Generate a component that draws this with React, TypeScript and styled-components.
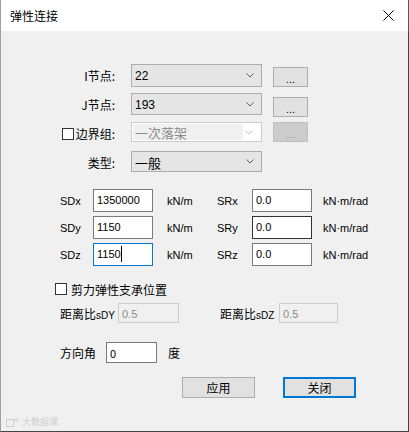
import React from "react";
import styled, { createGlobalStyle } from "styled-components";

const Global = createGlobalStyle`
  html, body { margin: 0; padding: 0; background: #f0f0f0; }
  * { box-sizing: border-box; }
`;

const FONT = `"Liberation Sans", "Noto Sans CJK SC", sans-serif`;

const Window = styled.div`
  width: 409px;
  height: 432px;
  display: flex;
  flex-direction: column;
  font-family: ${FONT};
  font-size: 12px;
  color: #000;
`;

const TitleBar = styled.div`
  height: 31px;
  background: #fff;
  display: flex;
  align-items: center;
  justify-content: space-between;
  padding: 0 14px 0 9px;
  border-left: 1px solid #a0a0a0;
  border-right: 1px solid #5a5a5a;
`;

const Title = styled.span`
  font-family: "Noto Sans CJK SC", sans-serif;
  font-size: 12px;
  margin-top: -1px;
`;

const Body = styled.div`
  flex: 1;
  background: #f0f0f0;
  border-left: 1px solid #a0a0a0;
  border-right: 1px solid #444;
  border-bottom: 1px solid #444;
  display: flex;
  flex-direction: column;
  padding-top: 33px;
  position: relative;
`;

const TopSection = styled.div`
  display: flex;
  flex-direction: column;
  gap: 6px;
  padding-left: 49px;
`;

const FieldRow = styled.div`
  display: flex;
  align-items: flex-start;
  height: 23px;
`;

const FieldLabel = styled.div`
  width: 65px;
  height: 23px;
  display: flex;
  align-items: center;
  justify-content: flex-end;
  font-family: "Noto Sans CJK SC", sans-serif;
  font-size: 12px;
  margin-right: 16px;
  gap: 2px;
`;

const CheckBox = styled.span<{ $size?: number }>`
  display: inline-block;
  width: ${(p) => p.$size ?? 12}px;
  height: ${(p) => p.$size ?? 12}px;
  border: 1px solid #333;
  background: #fff;
  flex: none;
`;

const Select = styled.div<{ $disabled?: boolean; $h: number }>`
  width: 131px;
  height: ${(p) => p.$h}px;
  border: 1px solid ${(p) => (p.$disabled ? "#cccccc" : "#adadad")};
  background: ${(p) => (p.$disabled ? "#fff" : "#e5e5e5")};
  display: flex;
  align-items: center;
  padding: ${(p) => (p.$disabled ? "1px" : "0 0 0 3px")};
  color: ${(p) => (p.$disabled ? "#8a8a8a" : "#000")};
`;

const SelectText = styled.span<{ $disabled?: boolean; $cjk?: boolean }>`
  flex: ${(p) => (p.$disabled ? "none" : "1")};
  width: ${(p) => (p.$disabled ? "110px" : "auto")};
  height: 100%;
  display: flex;
  align-items: center;
  background: ${(p) => (p.$disabled ? "#f0f0f0" : "transparent")};
  padding-left: ${(p) => (p.$disabled ? "2px" : "0")};
  font-family: ${(p) => (p.$cjk ? `"Noto Sans CJK SC", sans-serif` : FONT)};
  font-size: ${(p) => (p.$cjk ? "13px" : "12px")};
  padding-top: 1px;
`;

const Chevron = styled.svg`
  width: 8px;
  height: 5px;
  margin-left: auto;
  margin-right: 7px;
  flex: none;
`;

const DotButton = styled.div<{ $disabled?: boolean; $top: number; $h: number }>`
  width: 35px;
  height: ${(p) => p.$h}px;
  margin-top: ${(p) => p.$top}px;
  margin-left: 11px;
  border: 1px solid ${(p) => (p.$disabled ? "#bfbfbf" : "#adadad")};
  background: ${(p) => (p.$disabled ? "#cccccc" : "#e1e1e1")};
  color: ${(p) => (p.$disabled ? "#a0a0a0" : "#000")};
  display: flex;
  align-items: center;
  justify-content: center;
  font-size: 11px;
  padding-top: 3px;
`;

const StiffGrid = styled.div`
  display: grid;
  grid-template-columns: 33px 60px 14px 50px 35px 60px 11px auto;
  grid-auto-rows: 23px;
  row-gap: 4px;
  margin-top: 15px;
  padding-left: 59px;
  align-items: center;
`;

const AxisLabel = styled.span`
  font-size: 11px;
  padding-top: 1px;
`;

const Unit = styled.span`
  font-size: 11px;
  padding-top: 1px;
`;

const Spacer = styled.span``;

const TextBox = styled.div<{ $focus?: boolean; $dark?: boolean; $w?: number; $h?: number; $disabled?: boolean }>`
  width: ${(p) => p.$w ?? 60}px;
  height: ${(p) => p.$h ?? 23}px;
  border: 1px solid
    ${(p) => (p.$focus ? "#0078d7" : p.$dark ? "#333" : p.$disabled ? "#cccccc" : "#7a7a7a")};
  background: ${(p) => (p.$disabled ? "#f0f0f0" : "#fff")};
  color: ${(p) => (p.$disabled ? "#8a8a8a" : "#000")};
  display: flex;
  align-items: flex-start;
  padding: 3px 0 0 3px;
  font-size: 11px;
  line-height: 14px;
`;

const Caret = styled.span`
  display: inline-block;
  width: 1px;
  height: 16px;
  background: #000;
  margin-top: -1px;
`;

const ShearRow = styled.div`
  display: flex;
  align-items: center;
  gap: 4px;
  height: 14px;
  margin-top: 16px;
  padding-left: 54px;
  font-family: "Noto Sans CJK SC", sans-serif;
  font-size: 12px;
`;

const RatioRow = styled.div`
  display: flex;
  align-items: center;
  height: 20px;
  margin-top: 7px;
  padding-left: 59px;
`;

const RatioLabel = styled.span<{ $w: number }>`
  width: ${(p) => p.$w}px;
  font-family: "Noto Sans CJK SC", sans-serif;
  font-size: 12px;
  white-space: nowrap;
`;

const Sub = styled.span`
  font-family: ${FONT};
  font-size: 10px;
`;

const RatioGap = styled.span`
  width: 41px;
`;

const AngleRow = styled.div`
  display: flex;
  align-items: center;
  height: 21px;
  margin-top: 19px;
  padding-left: 59px;
  font-family: "Noto Sans CJK SC", sans-serif;
  font-size: 12px;
`;

const AngleLabel = styled.span`
  width: 46px;
`;

const Degree = styled.span`
  margin-left: 11px;
`;

const ButtonRow = styled.div`
  display: flex;
  height: 21px;
  margin-top: 14px;
  padding-left: 181px;
  gap: 28px;
`;

const PushButton = styled.div<{ $default?: boolean }>`
  width: 73px;
  height: 21px;
  border: ${(p) => (p.$default ? "2px solid #0078d7" : "1px solid #adadad")};
  background: #e1e1e1;
  display: flex;
  align-items: center;
  justify-content: center;
  font-family: "Noto Sans CJK SC", sans-serif;
  font-size: 12px;
`;

const Watermark = styled.div`
  position: absolute;
  left: 5px;
  bottom: 3px;
  display: flex;
  align-items: center;
  gap: 2px;
  color: #cfcfcf;
  font-family: "Noto Sans CJK SC", sans-serif;
  font-size: 9px;
`;

const Arrow: React.FC<{ light?: boolean }> = ({ light }) => (
  <Chevron viewBox="0 0 8 5">
    <path d="M0.5 0.5 L4 4 L7.5 0.5" fill="none" stroke={light ? "#c4c4c4" : "#606060"} strokeWidth="1" />
  </Chevron>
);

export default function App() {
  return (
    <>
      <Global />
      <Window>
        <TitleBar>
          <Title>弹性连接</Title>
          <svg width="11" height="11" viewBox="0 0 11 11">
            <path d="M0.5 0.5 L10.5 10.5 M10.5 0.5 L0.5 10.5" stroke="#000" strokeWidth="1" />
          </svg>
        </TitleBar>
        <Body>
          <TopSection>
            <FieldRow>
              <FieldLabel>I节点:</FieldLabel>
              <Select $h={23}>
                <SelectText>22</SelectText>
                <Arrow />
              </Select>
              <DotButton $top={3} $h={20}>...</DotButton>
            </FieldRow>
            <FieldRow>
              <FieldLabel>J节点:</FieldLabel>
              <Select $h={22}>
                <SelectText>193</SelectText>
                <Arrow />
              </Select>
              <DotButton $top={4} $h={20}>...</DotButton>
            </FieldRow>
            <FieldRow>
              <FieldLabel>
                <CheckBox />
                边界组:
              </FieldLabel>
              <Select $h={20} $disabled>
                <SelectText $disabled $cjk>一次落架</SelectText>
                <Arrow light />
              </Select>
              <DotButton $top={0} $h={20} $disabled>...</DotButton>
            </FieldRow>
            <FieldRow>
              <FieldLabel>类型:</FieldLabel>
              <Select $h={21}>
                <SelectText $cjk>一般</SelectText>
                <Arrow />
              </Select>
            </FieldRow>
          </TopSection>

          <StiffGrid>
            <AxisLabel>SDx</AxisLabel>
            <TextBox>1350000</TextBox>
            <Spacer />
            <Unit>kN/m</Unit>
            <AxisLabel>SRx</AxisLabel>
            <TextBox>0.0</TextBox>
            <Spacer />
            <Unit>kN·m/rad</Unit>

            <AxisLabel>SDy</AxisLabel>
            <TextBox>1150</TextBox>
            <Spacer />
            <Unit>kN/m</Unit>
            <AxisLabel>SRy</AxisLabel>
            <TextBox $dark>0.0</TextBox>
            <Spacer />
            <Unit>kN·m/rad</Unit>

            <AxisLabel>SDz</AxisLabel>
            <TextBox $focus>
              1150
              <Caret />
            </TextBox>
            <Spacer />
            <Unit>kN/m</Unit>
            <AxisLabel>SRz</AxisLabel>
            <TextBox>0.0</TextBox>
            <Spacer />
            <Unit>kN·m/rad</Unit>
          </StiffGrid>

          <ShearRow>
            <CheckBox />
            剪力弹性支承位置
          </ShearRow>

          <RatioRow>
            <RatioLabel $w={58}>
              距离比<Sub>sDY</Sub>
            </RatioLabel>
            <TextBox $w={61} $h={20} $disabled>0.5</TextBox>
            <RatioGap />
            <RatioLabel $w={59}>
              距离比<Sub>sDZ</Sub>
            </RatioLabel>
            <TextBox $w={59} $h={20} $disabled>0.5</TextBox>
          </RatioRow>

          <AngleRow>
            <AngleLabel>方向角</AngleLabel>
            <TextBox $w={51} $h={21}>0</TextBox>
            <Degree>度</Degree>
          </AngleRow>

          <ButtonRow>
            <PushButton>应用</PushButton>
            <PushButton $default>关闭</PushButton>
          </ButtonRow>

          <Watermark>
            <svg width="14" height="10" viewBox="0 0 14 10">
              <rect x="0.5" y="2.5" width="7" height="7" fill="none" stroke="#cfcfcf" />
              <path d="M8 2 h5 M8 4 h4" stroke="#cfcfcf" />
            </svg>
            大数据课
          </Watermark>
        </Body>
      </Window>
    </>
  );
}
